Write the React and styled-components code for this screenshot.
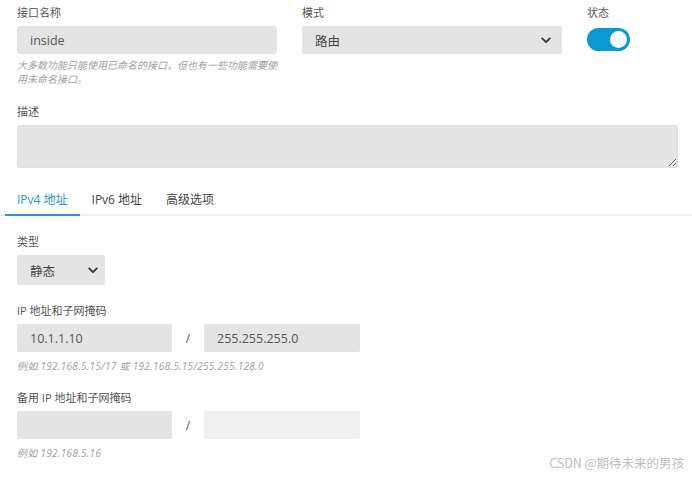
import styled, { createGlobalStyle } from 'styled-components';

const GlobalStyle = createGlobalStyle`
  html, body {
    margin: 0;
    background: #fff;
  }
  body {
    font-family: 'Open Sans', 'Noto Sans CJK SC', sans-serif;
    color: #555;
  }
  * {
    box-sizing: border-box;
  }
`;

const Chevron = () => (
  <svg width='10' height='7' viewBox='0 0 10 7' aria-hidden='true'>
    <polyline
      points='1.2,1.4 5,5.2 8.8,1.4'
      fill='none'
      stroke='#333'
      strokeWidth='1.8'
      strokeLinecap='round'
      strokeLinejoin='round'
    />
  </svg>
);

const App = () => {
  return (
    <>
      <GlobalStyle />
      <Page>
        <TopRow>
          <Field>
            <Label>接口名称</Label>
            <Input defaultValue='inside' />
            <Help>大多数功能只能使用已命名的接口，但也有一些功能需要使用未命名接口。</Help>
          </Field>
          <Field>
            <Label>模式</Label>
            <Select $width='260px'>
              <span>路由</span>
              <Chevron />
            </Select>
          </Field>
          <Field>
            <Label>状态</Label>
            <Toggle aria-label='状态' />
          </Field>
        </TopRow>

        <Section $top='19px'>
          <Label>描述</Label>
          <TextArea />
        </Section>

        <TabBar>
          <Tab className='on'>IPv4 地址</Tab>
          <Tab>IPv6 地址</Tab>
          <Tab>高级选项</Tab>
        </TabBar>

        <Section $top='19px'>
          <Label>类型</Label>
          <Select $width='88px' $small>
            <span>静态</span>
            <Chevron />
          </Select>
        </Section>

        <Section $top='19px'>
          <Label>IP 地址和子网掩码</Label>
          <AddrRow>
            <Input defaultValue='10.1.1.10' />
            <Slash>/</Slash>
            <Input defaultValue='255.255.255.0' />
          </AddrRow>
          <Hint>例如 192.168.5.15/17 或 192.168.5.15/255.255.128.0</Hint>
        </Section>

        <Section $top='18px'>
          <Label>备用 IP 地址和子网掩码</Label>
          <AddrRow>
            <Input />
            <Slash>/</Slash>
            <Input $light />
          </AddrRow>
          <Hint>例如 192.168.5.16</Hint>
        </Section>

        <Watermark>CSDN @期待未来的男孩</Watermark>
      </Page>
    </>
  );
};

const Page = styled.main`
  position: relative;
  width: 692px;
  height: 478px;
  overflow: hidden;
`;

const TopRow = styled.div`
  display: grid;
  grid-template-columns: 260px 260px auto;
  column-gap: 25px;
  padding: 6px 17px 0;
`;

const Field = styled.div`
  display: flex;
  flex-direction: column;
  align-items: flex-start;
`;

const Section = styled.section`
  display: flex;
  flex-direction: column;
  align-items: flex-start;
  padding: 0 17px;
  margin-top: ${(p) => p.$top || '0'};
`;

const Label = styled.label`
  display: block;
  font-size: 11px;
  line-height: 14px;
  color: #555;
  margin-bottom: 6px;
  white-space: nowrap;
`;

const Input = styled.input`
  width: 100%;
  height: 28px;
  border: none;
  outline: none;
  border-radius: 2px;
  background: ${(p) => (p.$light ? '#efefef' : '#e4e4e4')};
  padding: 0 13px;
  font-family: inherit;
  font-size: 12.5px;
  color: #555;
`;

const Help = styled.p`
  margin: 4px 0 0;
  font-size: 10px;
  line-height: 14px;
  font-style: italic;
  color: #a0a0a0;
`;

const Hint = styled(Help)`
  margin-top: 7px;
  letter-spacing: 0.3px;
`;

const Select = styled.div`
  display: flex;
  align-items: center;
  justify-content: space-between;
  width: ${(p) => p.$width};
  height: ${(p) => (p.$small ? '30px' : '28px')};
  padding: 0 ${(p) => (p.$small ? '7px' : '11px')} 0 13px;
  background: #e4e4e4;
  border-radius: 2px;
  font-size: 12.5px;
  color: #444;
`;

const Toggle = styled.button`
  position: relative;
  width: 43px;
  height: 23px;
  margin-top: 2px;
  padding: 0;
  border: none;
  border-radius: 12px;
  background: #0a99d6;

  &::after {
    content: '';
    position: absolute;
    top: 3px;
    right: 3px;
    width: 17px;
    height: 17px;
    border-radius: 50%;
    background: #fff;
  }
`;

const TextArea = styled.textarea`
  width: 661px;
  height: 43px;
  border: 1px solid #e0e0e0;
  border-radius: 2px;
  background: #e4e4e4;
  resize: vertical;
  outline: none;
`;

const TabBar = styled.ul`
  display: flex;
  margin: 18px 0 0;
  padding: 0 0 0 5px;
  list-style: none;
  border-bottom: 2px solid #efefef;
`;

const Tab = styled.li`
  padding: 0 12px;
  height: 30px;
  line-height: 28px;
  font-size: 12px;
  color: #444;
  border-bottom: 2px solid transparent;
  margin-bottom: -2px;

  &.on {
    color: #1a9bd7;
    border-color: #1a9bd7;
  }
`;

const AddrRow = styled.div`
  display: grid;
  grid-template-columns: 155px 32px 156px;
  align-items: center;
`;

const Slash = styled.span`
  text-align: center;
  font-size: 12px;
  color: #555;
`;

const Watermark = styled.div`
  position: absolute;
  right: 8px;
  bottom: 6px;
  font-size: 12.5px;
  color: #bdbdbd;
  font-family: 'Noto Sans CJK SC', sans-serif;
`;

export default App;
